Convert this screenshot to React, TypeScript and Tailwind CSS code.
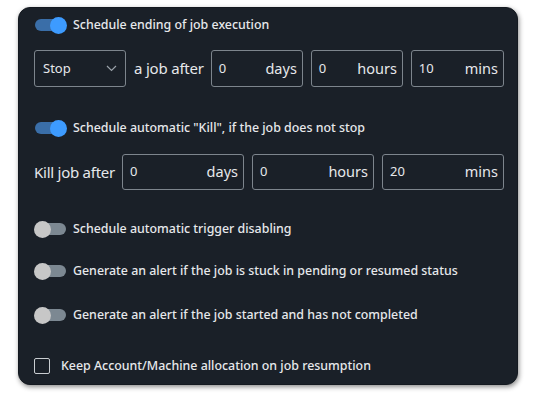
import React, { useState } from 'react';

const Toggle: React.FC<{ on: boolean; onClick: () => void }> = ({ on, onClick }) => (
  <button
    type="button"
    onClick={onClick}
    className="relative w-[33px] h-[18px] flex items-center shrink-0"
  >
    <span
      className={`absolute left-[1px] right-[1px] h-[12px] rounded-full ${on ? 'bg-[#3a6ea8]' : 'bg-[#7c8892]'}`}
    />
    <span
      className={`absolute w-[17px] h-[17px] rounded-full ${on ? 'left-[16px] bg-[#3d9bff]' : 'left-0 bg-[#c7c7c7]'}`}
    />
  </button>
);

const ToggleRow: React.FC<{ label: string; on: boolean; onClick: () => void; className?: string }> = ({
  label,
  on,
  onClick,
  className,
}) => (
  <div className={`flex items-center gap-[6px] h-[20px] ${className ?? ''}`}>
    <Toggle on={on} onClick={onClick} />
    <span className="text-[12.4px] font-medium text-[#e6e8eb] whitespace-nowrap">{label}</span>
  </div>
);

const UnitInput: React.FC<{ value: string; unit: string; className: string }> = ({ value, unit, className }) => (
  <div
    className={`flex items-center justify-between shrink-0 h-full border border-[#7d858d] rounded-[3px] pl-[7px] pr-[5px] ${className}`}
  >
    <span className="text-[13px] text-[#e6e8eb]">{value}</span>
    <span className="text-[14.5px] text-[#e6e8eb]">{unit}</span>
  </div>
);

export default function App() {
  const [t, setT] = useState([true, true, false, false, false]);
  const [keep, setKeep] = useState(false);
  const flip = (i: number) => setT((p) => p.map((v, j) => (j === i ? !v : v)));

  return (
    <div className="w-[533px] h-[395px] bg-white pt-[7px] pl-[18px]" style={{ fontFamily: '"Noto Sans", "Open Sans", sans-serif' }}>
      <div className="w-[500px] h-[378px] rounded-[12px] bg-[#1a2028] border border-[#141920] shadow-[1px_2px_5px_rgba(0,0,0,0.45)] pl-[15px] pr-[14px] pt-[7px] flex flex-col">
        <ToggleRow label="Schedule ending of job execution" on={t[0]} onClick={() => flip(0)} />

        <div className="flex items-center h-[37px] mt-[15px]">
          <div className="w-[92px] shrink-0 h-full border border-[#7d858d] rounded-[3px] flex items-center justify-between pl-[8px] pr-[8px]">
            <span className="text-[13px] text-[#e6e8eb]">Stop</span>
            <svg width="11" height="7" viewBox="0 0 11 7" fill="none" stroke="#9aa2aa" strokeWidth="1.2">
              <path d="M1 1l4.5 4.5L10 1" />
            </svg>
          </div>
          <span className="text-[15px] text-[#e6e8eb] ml-[8px] mr-[7px] whitespace-nowrap tracking-[-0.2px]">a job after</span>
          <UnitInput value="0" unit="days" className="w-[92px]" />
          <UnitInput value="0" unit="hours" className="w-[92px] ml-[8px]" />
          <UnitInput value="10" unit="mins" className="w-[93px] ml-[8px]" />
        </div>

        <ToggleRow
          label={'Schedule automatic "Kill", if the job does not stop'}
          on={t[1]}
          onClick={() => flip(1)}
          className="mt-[31px]"
        />

        <div className="flex items-center h-[36px] mt-[16px]">
          <span className="text-[15px] text-[#e6e8eb] mr-[7px] whitespace-nowrap tracking-[-0.25px]">Kill job after</span>
          <UnitInput value="0" unit="days" className="w-[122px]" />
          <UnitInput value="0" unit="hours" className="w-[122px] ml-[8px]" />
          <UnitInput value="20" unit="mins" className="w-[122px] ml-[8px]" />
        </div>

        <ToggleRow label="Schedule automatic trigger disabling" on={t[2]} onClick={() => flip(2)} className="mt-[29px]" />
        <ToggleRow
          label="Generate an alert if the job is stuck in pending or resumed status"
          on={t[3]}
          onClick={() => flip(3)}
          className="mt-[22px]"
        />
        <ToggleRow
          label="Generate an alert if the job started and has not completed"
          on={t[4]}
          onClick={() => flip(4)}
          className="mt-[24px]"
        />

        <label className="flex items-center gap-[11px] h-[20px] mt-[31px] cursor-pointer">
          <span
            onClick={() => setKeep(!keep)}
            className={`w-[16px] h-[16px] border border-[#c9cdd1] rounded-[2px] shrink-0 ${keep ? 'bg-[#3d9bff]' : ''}`}
          />
          <span className="text-[12.4px] font-medium text-[#e6e8eb] whitespace-nowrap">Keep Account/Machine allocation on job resumption</span>
        </label>
      </div>
    </div>
  );
}
